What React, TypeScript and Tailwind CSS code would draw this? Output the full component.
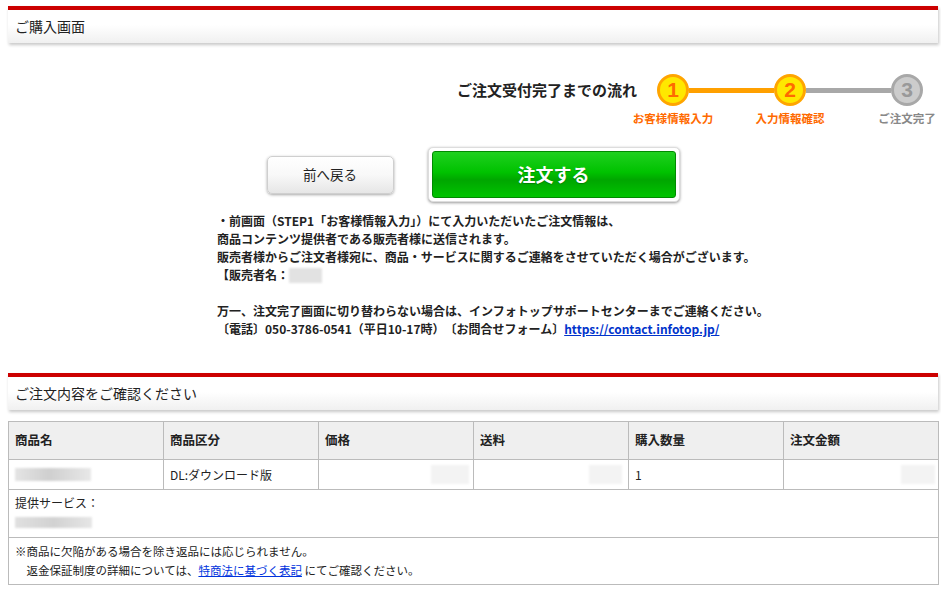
import React from "react";

const SectionHeader = ({ title }: { title: string }) => (
  <div className="border-t-4 border-[#cc0000] h-[37px] bg-[linear-gradient(#ffffff,#ffffff_45%,#f0f0f0)] shadow-[1px_2px_3px_rgba(0,0,0,0.22)] flex items-center pl-[7px] pb-[2px] text-[14px] leading-[20px] text-[#222]">
    {title}
  </div>
);

const Circle = ({ n, active }: { n: number; active: boolean }) => (
  <div
    className={
      active
        ? "w-[32px] h-[32px] rounded-full border-[3px] border-[#ffa500] bg-[#ffe800] flex items-center justify-center text-[21px] font-bold text-[#ff6a00] font-['Liberation_Sans',Arial,sans-serif]"
        : "w-[32px] h-[32px] rounded-full border-[3px] border-[#a8a8a8] bg-[#cccccc] flex items-center justify-center text-[21px] font-bold text-[#999999] font-['Liberation_Sans',Arial,sans-serif]"
    }
  >
    {n}
  </div>
);

const Step = ({ n, active, label }: { n: number; active: boolean; label: string }) => (
  <div className="w-[32px] flex flex-col items-center">
    <Circle n={n} active={active} />
    <div
      className={
        active
          ? "mt-[5px] whitespace-nowrap text-[11.5px] leading-[14px] font-bold text-[#ff6a00]"
          : "mt-[5px] whitespace-nowrap text-[11.5px] leading-[14px] font-bold text-[#888888]"
      }
    >
      {label}
    </div>
  </div>
);

const Blur = ({ className }: { className: string }) => (
  <div className={"blur-[1px] " + className} />
);

export default function App() {
  return (
    <div className="w-[941px] h-[602px] overflow-hidden bg-white text-[#222] font-['Noto_Sans_CJK_JP','Noto_Sans',sans-serif] pt-[6px] pl-[8px]">
      <div className="w-[930px]">
        <SectionHeader title="ご購入画面" />

        {/* flow steps */}
        <div className="flex justify-end items-start mt-[31px] pr-[15px]">
          <div className="text-[15px] font-bold leading-[32px] mr-[20px] text-[#222]">
            ご注文受付完了までの流れ
          </div>
          <Step n={1} active label="お客様情報入力" />
          <div className="w-[85px] h-[5px] mt-[13.5px] bg-[#ffa000]" />
          <Step n={2} active label="入力情報確認" />
          <div className="w-[85px] h-[5px] mt-[13.5px] bg-[#a8a8a8]" />
          <Step n={3} active={false} label="ご注文完了" />
        </div>

        {/* buttons */}
        <div className="flex justify-center items-center gap-[34px] mt-[22px]">
          <button className="w-[127px] h-[38px] rounded-[5px] border border-[#cfcfcf] bg-[linear-gradient(#ffffff,#f8f8f8_50%,#e6e6e6)] shadow-[0_1px_3px_rgba(0,0,0,0.35)] text-[13.5px] text-[#222] flex items-center justify-center">
            前へ戻る
          </button>
          <div className="p-[3px] bg-white rounded-[5px] border border-[#dddddd] shadow-[0_1px_3px_rgba(0,0,0,0.4)]">
            <button className="w-[244px] h-[47px] rounded-[3px] border border-[#008a00] bg-[linear-gradient(#1fd01f,#00c200_45%,#00a600_62%,#00c400)] text-white text-[18px] font-bold flex items-center justify-center [text-shadow:0_1px_1px_rgba(0,0,0,0.25)]">
              注文する
            </button>
          </div>
        </div>

        {/* notice */}
        <div className="pl-[209px] mt-[10px] text-[12px] leading-[18px] font-bold text-[#222]">
          <div>・前画面（STEP1「お客様情報入力」）にて入力いただいたご注文情報は、</div>
          <div>商品コンテンツ提供者である販売者様に送信されます。</div>
          <div>販売者様からご注文者様宛に、商品・サービスに関するご連絡をさせていただく場合がございます。</div>
          <div className="flex items-center">
            <span>【販売者名：</span>
            <Blur className="w-[33px] h-[15px] bg-[#e2e2e2]" />
          </div>
          <div className="h-[18px]" />
          <div>万一、注文完了画面に切り替わらない場合は、インフォトップサポートセンターまでご連絡ください。</div>
          <div>
            {"〔電話〕050-3786-0541（平日10-17時）　〔お問合せフォーム〕"}
            <a className="text-[#0033cc] underline" href="#">https://contact.infotop.jp/</a>
          </div>
        </div>

        <div className="mt-[35px]">
          <SectionHeader title="ご注文内容をご確認ください" />
        </div>

        {/* table */}
        <table className="mt-[11px] w-[930px] table-fixed border-collapse text-[12px] text-[#222]">
          <thead>
            <tr className="h-[38px] bg-[#efefef]">
              {["商品名", "商品区分", "価格", "送料", "購入数量", "注文金額"].map((h) => (
                <th key={h} className="w-[155px] border border-[#bbbbbb] text-left font-bold pl-[6px] text-[12.5px]">
                  {h}
                </th>
              ))}
            </tr>
          </thead>
          <tbody>
            <tr className="h-[30px]">
              <td className="border border-[#bbbbbb] pl-[6px]">
                <Blur className="w-[76px] h-[13px] bg-[linear-gradient(90deg,#e4e4e4,#cfcfcf_45%,#e8e8e8)]" />
              </td>
              <td className="border border-[#bbbbbb] pl-[6px]">DL:ダウンロード版</td>
              <td className="border border-[#bbbbbb] pr-[4px]">
                <div className="flex justify-end">
                  <Blur className="w-[38px] h-[19px] bg-[#f3f3f3]" />
                </div>
              </td>
              <td className="border border-[#bbbbbb] pr-[6px]">
                <div className="flex justify-end">
                  <Blur className="w-[33px] h-[19px] bg-[#f3f3f3]" />
                </div>
              </td>
              <td className="border border-[#bbbbbb] pl-[6px]">1</td>
              <td className="border border-[#bbbbbb] pr-[3px]">
                <div className="flex justify-end">
                  <Blur className="w-[34px] h-[19px] bg-[#f3f3f3]" />
                </div>
              </td>
            </tr>
            <tr className="h-[48px]">
              <td colSpan={6} className="border border-[#bbbbbb] pl-[6px] align-top pt-[5px]">
                <div className="leading-[16px]">提供サービス：</div>
                <Blur className="mt-[6px] w-[77px] h-[11px] bg-[linear-gradient(90deg,#e0e0e0,#d2d2d2_50%,#e6e6e6)]" />
              </td>
            </tr>
            <tr className="h-[47px]">
              <td colSpan={6} className="border border-[#bbbbbb] pl-[6px] align-top pt-[4px] text-[11.5px] leading-[19px]">
                <div>※商品に欠陥がある場合を除き返品には応じられません。</div>
                <div>
                  {"\u3000返金保証制度の詳細については、"}
                  <a href="#" className="text-[#0033dd] underline">特商法に基づく表記</a>
                  {"\u00a0にてご確認ください。"}
                </div>
              </td>
            </tr>
          </tbody>
        </table>
      </div>
    </div>
  );
}
